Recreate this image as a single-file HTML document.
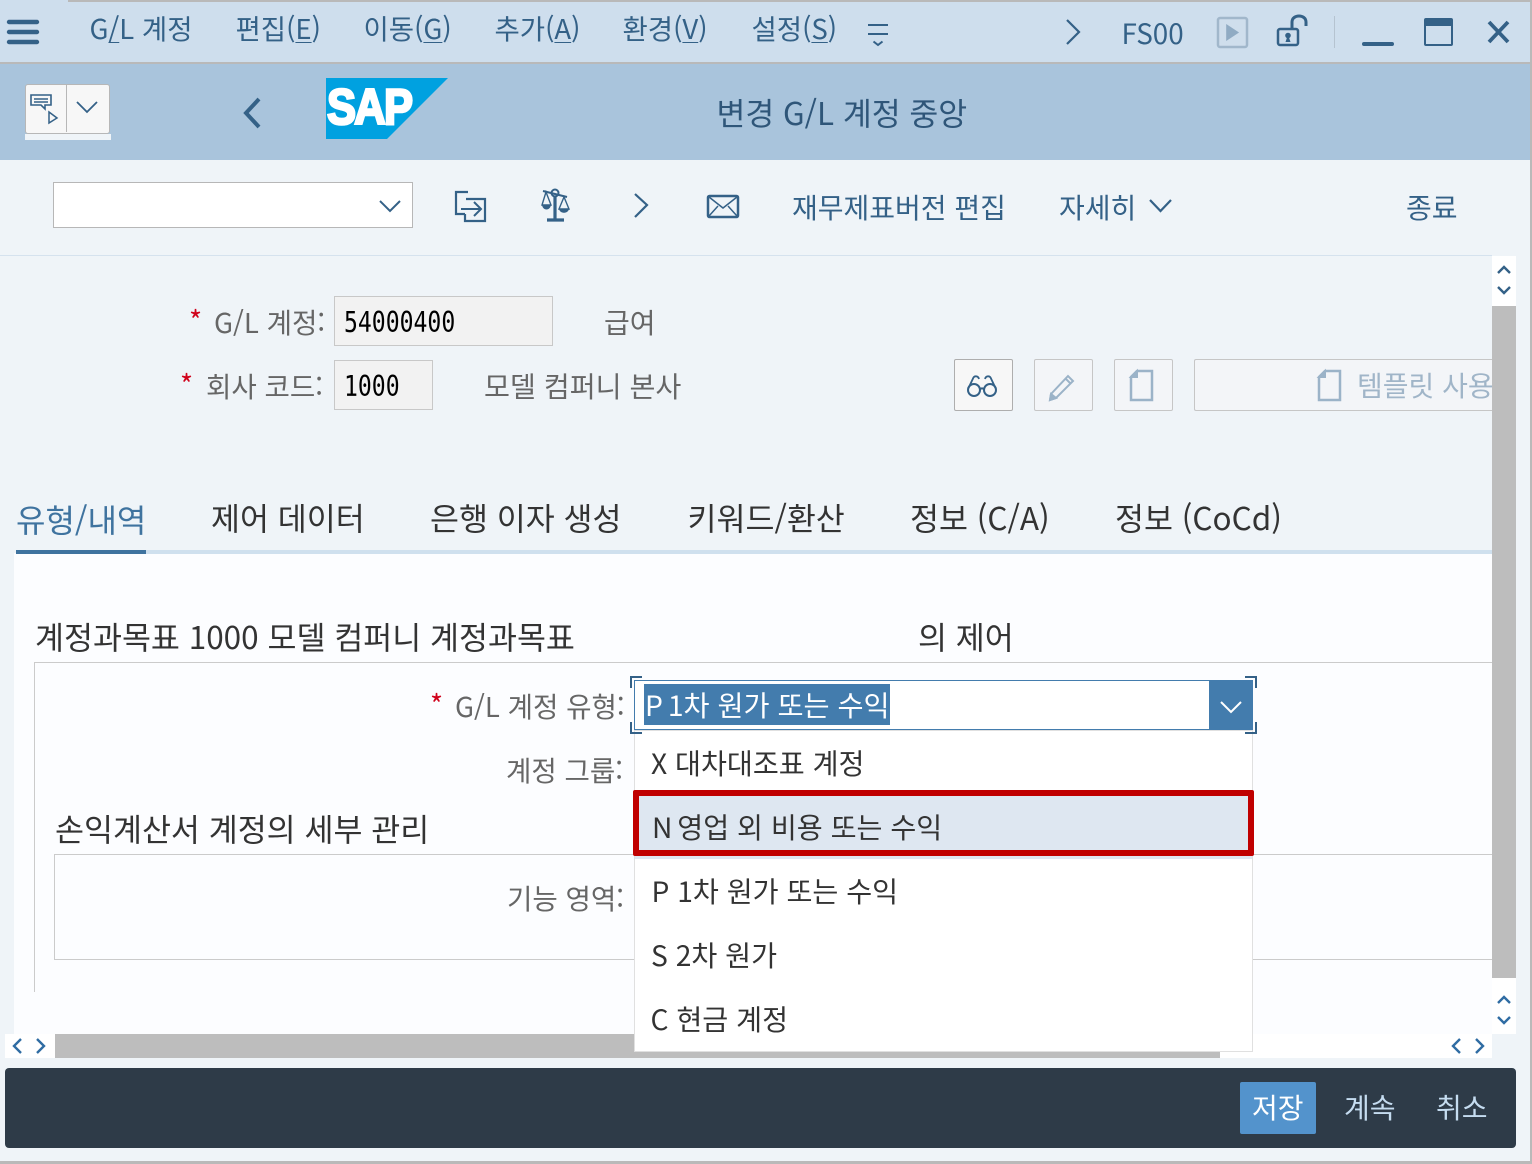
<!DOCTYPE html>
<html lang="ko"><head><meta charset="utf-8"><title>변경 G/L 계정 중앙</title>
<style>
html,body{margin:0;padding:0}
body{width:1532px;height:1164px;position:relative;overflow:hidden;background:#eff4f8;font-family:"Noto Sans CJK KR","Liberation Sans",sans-serif;color:#333}
div,span.t,svg{position:absolute}
.t{position:absolute;white-space:nowrap;line-height:40px;height:40px;font-size:28px}
.m{color:#346187;font-size:27.5px}
.l{color:#666;font-size:27.6px}
.tab{font-size:31.5px;color:#333}
.dd{font-size:28.2px;color:#333}
.req{color:#d0021b;font-size:28px}
svg{overflow:visible;fill:none;stroke:#346187;stroke-width:2}
u{text-decoration-thickness:1px;text-underline-offset:3px}
.mono{font-family:"DejaVu Sans Mono","Liberation Mono",monospace;font-size:23.1px;color:#000;transform:scale(1,1.25);transform-origin:left center}
</style></head><body>
<!-- bands -->
<div style="left:0;top:0;width:1532px;height:64px;background:#cedeed"></div>
<div style="left:68px;top:0;width:1464px;height:2px;background:#b9b9b9"></div>
<div style="left:0;top:62px;width:1532px;height:2px;background:#b9b9b9"></div>
<div style="left:0;top:64px;width:1532px;height:96px;background:#a9c4dc"></div>
<div style="left:0;top:255px;width:1492px;height:1px;background:#d5e2ee"></div>
<div style="left:1530px;top:0;width:2px;height:1164px;background:#b9b9b9"></div>
<div style="left:0;top:1161px;width:1532px;height:3px;background:#b9b9b9"></div>

<!-- hamburger -->
<svg style="left:0;top:0" width="50" height="50"><path d="M9 22H37M9 32H37M9 42H37" stroke-width="4.4" stroke-linecap="round"/></svg>
<span class="t m" style="left:89.500px;top:7px">G<u>/</u>L 계정</span>
<span class="t m" style="left:235.500px;top:7px">편집(<u>E</u>)</span>
<span class="t m" style="left:363.500px;top:7px">이동(<u>G</u>)</span>
<span class="t m" style="left:494.500px;top:7px">추가(<u>A</u>)</span>
<span class="t m" style="left:622.500px;top:7px">환경(<u>V</u>)</span>
<span class="t m" style="left:751.500px;top:7px">설정(<u>S</u>)</span>
<svg style="left:860px;top:20px" width="36" height="26"><path d="M8 5H28M8 14H28M13.500 21.500L18 25L22.500 21.500"/></svg>
<svg style="left:1060px;top:16px" width="26" height="32"><path d="M7 4L19 16L7 28" stroke-width="2.200"/></svg>
<span class="t m" style="left:1121.500px;top:13px;font-size:27.800px">FS00</span>
<svg style="left:1216px;top:16px" width="34" height="34"><rect x="2" y="2" width="29" height="29" rx="2" stroke="#a1b7cb" stroke-width="2.500" fill="#cfdeec"/><path d="M10 8L24 16.500L10 25Z" fill="#90abc3" stroke="none" transform="translate(1 0) scale(.92 1)"/></svg>
<svg style="left:1274px;top:13px" width="38" height="36"><rect x="4" y="16" width="20" height="16" rx="2" stroke-width="2.500"/><path d="M18 15V9C18 1 32 1 32 9V13" stroke-width="3"/><circle cx="14" cy="22.500" r="2.800" fill="#346187" stroke="none"/><path d="M11.500 29L13.500 23H14.500L16.500 29Z" fill="#346187" stroke="none"/></svg>
<div style="left:1334px;top:16px;width:1px;height:32px;background:#b5c3d0"></div>
<div style="left:1362px;top:42px;width:32px;height:4px;border-radius:2px;background:#346187"></div>
<svg style="left:1424px;top:17px" width="30" height="30"><rect x="1" y="2" width="27" height="26" rx="1" stroke-width="2"/><rect x="1" y="2" width="27" height="7" fill="#346187" stroke="none"/></svg>
<svg style="left:1486px;top:20px" width="26" height="26"><path d="M3 2L22 22M22 2L3 22" stroke-width="3.800"/></svg>

<!-- header -->
<div style="left:25px;top:84px;width:83px;height:48px;background:#f7f7f7;border:1px solid #b7b7b7;border-radius:3px"></div>
<div style="left:66px;top:85px;width:1px;height:47px;background:#b7b7b7"></div>
<div style="left:25px;top:134px;width:86px;height:6px;background:#eff4f8"></div>
<svg style="left:28px;top:93px" width="32" height="32" stroke-width="1.500"><path d="M3 2H23V12H17V16L13 12H3Z" stroke-width="1.600"/><path d="M6 6H20M6 9H20" stroke-width="1.500"/><path d="M21 19L29 25L21 30Z" stroke-width="1.500"/></svg>
<svg style="left:75px;top:100px" width="26" height="16"><path d="M2 2L12 12L22 2" stroke-width="1.800"/></svg>
<svg style="left:240px;top:95px" width="24" height="36"><path d="M19 4L6 18L19 32" stroke-width="4"/></svg>
<svg style="left:326px;top:78px;overflow:hidden" width="122" height="61"><path d="M0 0H122L61 61H0Z" fill="#00a1e0" stroke="none"/></svg>
<span style="position:absolute;left:327px;top:74px;height:66px;font:900 50px/66px 'Liberation Sans',sans-serif;color:#fff;letter-spacing:-2px;-webkit-text-stroke:2.600px #fff;white-space:nowrap;transform:scaleX(.87);transform-origin:left center">SAP</span>
<span class="t" style="left:716.500px;top:93px;font-size:31.4px;color:#2f5679">변경 G/L 계정 중앙</span>

<!-- toolbar -->
<div style="left:53px;top:182px;width:358px;height:44px;background:#fff;border:1px solid #b7b7b7"></div>
<svg style="left:378px;top:198px" width="26" height="16"><path d="M2 3L12 13L22 3"/></svg>
<svg style="left:454px;top:190px" width="34" height="34"><path d="M14 2H2V24H11M12 9H31V31H11V24" stroke-width="2.200"/><path d="M7 19H27M20 12L27 19L20 26" stroke-width="2"/></svg>
<svg style="left:540px;top:188px" width="32" height="36"><path d="M15 8V32M7 32H24" stroke-width="3.200"/><circle cx="15" cy="5" r="3.500" stroke-width="2"/><path d="M3 3L27 9" stroke-width="2"/><path d="M6 4L2 17H11ZM24 9L19 21H29Z" stroke-width="1.400"/><path d="M2 17C3 23 10 23 11 17ZM19 21C20 26 28 26 29 21Z" fill="#346187" stroke="none"/></svg>
<svg style="left:630px;top:192px" width="22" height="28"><path d="M5 2L17 13L5 25" stroke-width="2.200"/></svg>
<svg style="left:706px;top:194px" width="34" height="26"><rect x="2" y="2" width="30" height="21" rx="1.500" stroke-width="2.500"/><path d="M3 3L17 14L31 3M3 22L12 12M31 22L22 12" stroke-width="1.500"/></svg>
<span class="t m" style="left:792px;top:187px;font-size:28px">재무제표버전 편집</span>
<span class="t m" style="left:1059px;top:187px;font-size:28px">자세히</span>
<svg style="left:1148px;top:198px" width="26" height="18"><path d="M2 2L12.500 13L23 2" stroke-width="2.200"/></svg>
<span class="t m" style="left:1406px;top:187px;font-size:28px">종료</span>

<!-- header form -->
<span class="t req" style="left:189px;top:300px">*</span>
<span class="t l" style="left:214px;top:301px">G/L 계정:</span>
<div style="left:334px;top:296px;width:217px;height:48px;background:#f2f2f2;border:1px solid #c8c8c8"></div>
<span class="t mono" style="left:344px;top:303px">54000400</span>
<span class="t l" style="left:604px;top:302px;font-size:28px">급여</span>
<span class="t req" style="left:180px;top:364px">*</span>
<span class="t l" style="left:206px;top:365px">회사 코드:</span>
<div style="left:334px;top:360px;width:97px;height:48px;background:#f2f2f2;border:1px solid #c8c8c8"></div>
<span class="t mono" style="left:344px;top:367px">1000</span>
<span class="t l" style="left:484px;top:366px;font-size:28.2px">모델 컴퍼니 본사</span>

<!-- header buttons -->
<div style="left:954px;top:359px;width:57px;height:50px;background:#f7f7f7;border:1px solid #aeaeae;border-radius:2px"></div>
<div style="left:1034px;top:359px;width:57px;height:50px;background:#f3f5f8;border:1px solid #c6c6c6;border-radius:2px"></div>
<div style="left:1114px;top:359px;width:57px;height:50px;background:#f3f5f8;border:1px solid #c6c6c6;border-radius:2px"></div>
<div style="left:1194px;top:359px;width:298px;height:50px;background:#f3f5f8;border:1px solid #c6c6c6;border-right:0;border-radius:2px 0 0 2px"></div>
<svg style="left:966px;top:374px" width="32" height="26"><circle cx="8" cy="16" r="6" stroke-width="2"/><circle cx="24" cy="16" r="6" stroke-width="2"/><path d="M14 15.500C15 14 17 14 18 15.500" stroke-width="2"/><path d="M2.500 14L7 4.500C8 1.500 12 1.500 13 5M29.500 14L25 4.500C24 1.500 20 1.500 19 5" stroke-width="1.800"/></svg>
<svg style="left:1047px;top:372px" width="30" height="30" stroke="#9bb3c8"><path d="M4 22L21 4L26 9L9 26L3 28Z" stroke="#9bb3c8" stroke-width="2"/><path d="M3 28L4 22L9 26Z" fill="#9bb3c8" stroke="#9bb3c8"/><path d="M19 7L24 12" stroke="#9bb3c8" stroke-width="2"/></svg>
<svg style="left:1127px;top:369px" width="28" height="34"><path d="M10 2H25V31H4V8Z" stroke="#9bb3c8" stroke-width="2.500"/><path d="M10 2V8H4Z" fill="#9bb3c8" stroke="#9bb3c8" stroke-width="2"/></svg>
<svg style="left:1315px;top:369px" width="28" height="34"><path d="M10 2H25V31H4V8Z" stroke="#9bb3c8" stroke-width="2.500"/><path d="M10 2V8H4Z" fill="#9bb3c8" stroke="#9bb3c8" stroke-width="2"/></svg>
<span class="t" style="left:1357px;top:365px;width:135px;overflow:hidden;color:#a0b5c8;font-size:28px">템플릿 사용</span>

<!-- content -->
<div style="left:14px;top:553px;width:1478px;height:481px;background:#fcfdff"></div>
<div style="left:16px;top:550px;width:1476px;height:4px;background:#cfe0ee"></div>
<div style="left:16px;top:550px;width:130px;height:4px;background:#3f739f"></div>
<span class="t tab" style="left:16px;top:499px;color:#3f739f;font-size:32px">유형/내역</span>
<span class="t tab" style="left:211px;top:497px">제어 데이터</span>
<span class="t tab" style="left:430px;top:497px">은행 이자 생성</span>
<span class="t tab" style="left:687.500px;top:497px">키워드/환산</span>
<span class="t tab" style="left:910px;top:497px">정보 (C/A)</span>
<span class="t tab" style="left:1115px;top:497px">정보 (CoCd)</span>

<span class="t" style="left:35px;top:616px;font-size:31.5px">계정과목표 1000 모델 컴퍼니 계정과목표</span>
<span class="t" style="left:918px;top:616px;font-size:31.5px">의 제어</span>
<div style="left:34px;top:662px;width:1458px;height:1px;background:#cbcbcb"></div>
<div style="left:34px;top:662px;width:1px;height:330px;background:#cbcbcb"></div>
<span class="t req" style="left:430px;top:684px">*</span>
<span class="t l" style="left:455px;top:685px">G/L 계정 유형:</span>
<span class="t l" style="left:506px;top:749px">계정 그룹:</span>
<span class="t" style="left:55px;top:808px;font-size:31.5px">손익계산서 계정의 세부 관리</span>
<div style="left:54px;top:854px;width:1438px;height:1px;background:#cbcbcb"></div>
<div style="left:54px;top:854px;width:1px;height:106px;background:#cbcbcb"></div>
<div style="left:54px;top:959px;width:1438px;height:1px;background:#cbcbcb"></div>
<span class="t l" style="left:507px;top:877px">기능 영역:</span>

<!-- scrollbars -->
<div style="left:1492px;top:256px;width:24px;height:50px;background:#fff"></div>
<div style="left:1492px;top:306px;width:24px;height:672px;background:#bdbdbd"></div>
<div style="left:1492px;top:978px;width:24px;height:56px;background:#fff"></div>
<svg style="left:1496px;top:262px" width="16" height="36"><path d="M2 11L8 5L14 11M2 25L8 31L14 25" stroke-width="2.400"/></svg>
<svg style="left:1496px;top:990px" width="16" height="36"><path d="M2 13L8 7L14 13M2 27L8 33L14 27" stroke-width="2.400" stroke="#2f6ca3"/></svg>
<div style="left:5px;top:1034px;width:1487px;height:24px;background:#fff"></div>
<div style="left:55px;top:1034px;width:1165px;height:24px;background:#bdbdbd"></div>
<svg style="left:10px;top:1036px" width="40" height="20"><path d="M11 3L4 10L11 17M27 3L34 10L27 17" stroke-width="2.400" stroke="#2f6ca3"/></svg>
<svg style="left:1449px;top:1036px" width="40" height="20"><path d="M11 3L4 10L11 17M27 3L34 10L27 17" stroke-width="2.400" stroke="#2f6ca3"/></svg>

<!-- dropdown -->
<div style="left:634px;top:730px;width:617px;height:320px;background:#fff;border:1px solid #e0e0e0"></div>
<div style="left:635px;top:794px;width:617px;height:65px;background:#dee7f1"></div>
<div style="left:633px;top:790px;width:621px;height:66px;box-sizing:border-box;border:6px solid #c00000;border-radius:2px"></div>
<span class="t dd" style="left:651px;top:743px">X 대차대조표 계정</span>
<span class="t dd" style="left:652px;top:807px"><span style="letter-spacing:-1.500px">N </span>영업 외 비용 또는 수익</span>
<span class="t dd" style="left:651.500px;top:871px">P 1차 원가 또는 수익</span>
<span class="t dd" style="left:651px;top:935px">S 2차 원가</span>
<span class="t dd" style="left:650.500px;top:999px">C 현금 계정</span>

<!-- input -->
<div style="left:634px;top:680px;width:617px;height:48px;background:#fff;border:1px solid #437cad"></div>
<div style="left:1209px;top:680px;width:44px;height:50px;background:#437cad"></div>
<div style="left:644px;top:684px;width:246px;height:41px;background:#437cad"></div>
<span class="t" style="left:645px;top:685px;color:#fff;font-size:28.3px"><span style="letter-spacing:-1.500px">P </span>1차 원가 또는 수익</span>
<svg style="left:1219px;top:698px" width="24" height="18"><path d="M2 4L12 14L22 4" stroke="#fff" stroke-width="2"/></svg>
<svg style="left:630px;top:676px" width="628" height="58"><path d="M12 1H1V12M615 1H626V12M12 57H1V46M615 57H626V46" stroke="#346187" stroke-width="2"/></svg>

<!-- footer -->
<div style="left:5px;top:1068px;width:1511px;height:80px;background:#2e3b48;border-radius:4px"></div>
<div style="left:1240px;top:1082px;width:76px;height:52px;background:#5393cc;border-radius:2px"></div>
<span class="t" style="left:1252px;top:1087px;color:#fff;font-size:28px">저장</span>
<span class="t" style="left:1344px;top:1087px;color:#c5dcf0;font-size:28px">계속</span>
<span class="t" style="left:1436px;top:1087px;color:#c5dcf0;font-size:28px">취소</span>
</body></html>
